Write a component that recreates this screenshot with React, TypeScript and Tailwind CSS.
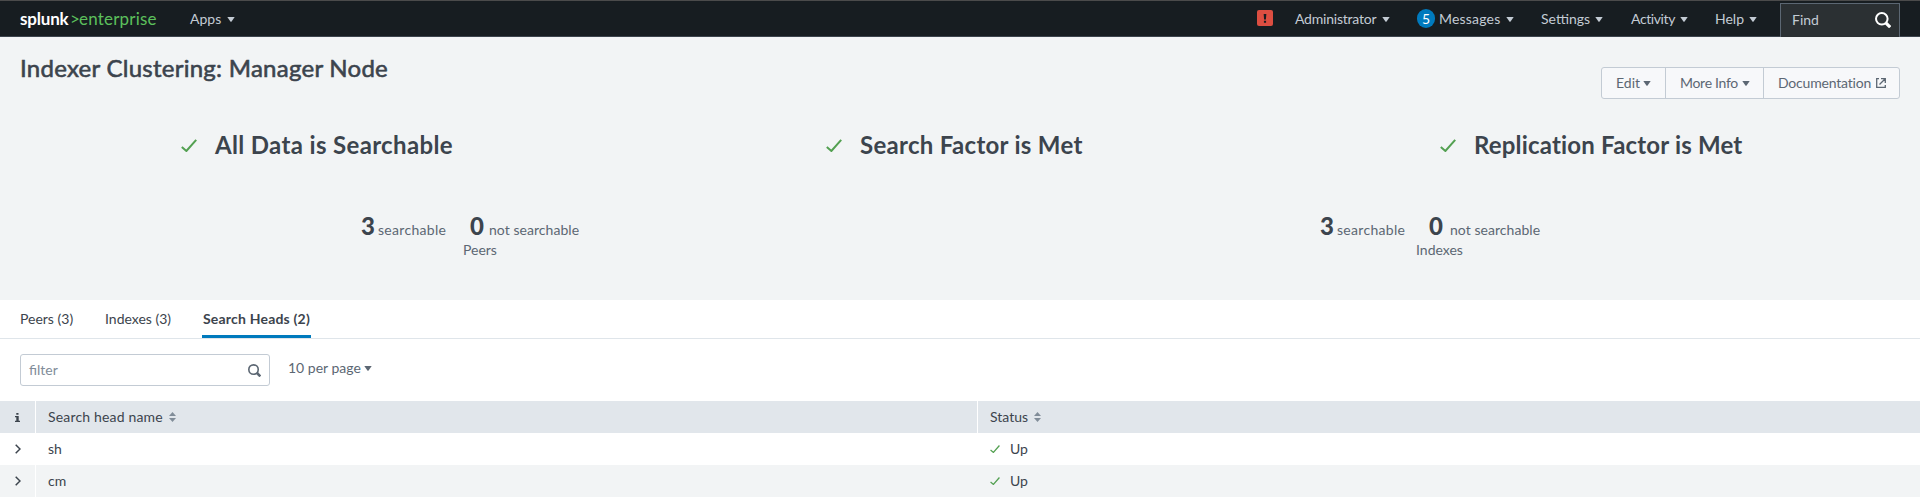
import type { ReactNode } from "react";

function Caret({ className = "" }: { className?: string }) {
  return (
    <svg viewBox="0 0 8 5" className={`h-[5px] w-2 shrink-0 ${className}`} fill="currentColor">
      <path d="M0.3 0h7.4L4.6 4.5q-.6.7-1.2 0z" />
    </svg>
  );
}

function Check({ className = "" }: { className?: string }) {
  return (
    <svg viewBox="0 0 16 13" className={`shrink-0 text-[#53a051] ${className}`} fill="none" stroke="currentColor">
      <path d="M0.8 8l4.6 4L15.2 0.8" vectorEffect="non-scaling-stroke" />
    </svg>
  );
}

function Magnifier({ className = "" }: { className?: string }) {
  return (
    <svg viewBox="0 0 16 16" className={`shrink-0 ${className}`} fill="none" stroke="currentColor">
      <circle cx="6.8" cy="6.8" r="5.8" strokeWidth="2" />
      <path d="M10.8 10.8l4.4 4.4" strokeWidth="3.2" />
    </svg>
  );
}

function Sort() {
  return (
    <svg viewBox="0 0 7 10" className="ml-1.5 h-[10px] w-[7px] shrink-0 text-[#818d99]" fill="currentColor">
      <path d="M0 4L3.5 0 7 4zM0 6h7L3.5 10z" />
    </svg>
  );
}

function Menu({ children, className }: { children: ReactNode; className: string }) {
  return (
    <div className={`flex shrink-0 items-center justify-between whitespace-nowrap ${className}`}>
      <span>{children}</span>
      <Caret />
    </div>
  );
}

function Navbar() {
  return (
    <header className="flex h-[37px] border-t border-b border-t-[#4b4b4b] border-b-[#3c444d] bg-[#171d21] text-[14px] leading-5 text-[#c3cbd4]">
      <div className="ml-5 flex h-[35px] w-[137px] shrink-0 items-center text-[17px] whitespace-nowrap">
        <span className="w-[50px] font-bold tracking-[-0.2px] text-white">splunk</span>
        <span className="w-[9px] text-[#5cc05c]">&gt;</span>
        <span className="tracking-[0.2px] text-[#5cc05c]">enterprise</span>
      </div>
      <Menu className="ml-[33px] h-9 w-[45px]">Apps</Menu>
      <div className="ml-auto flex h-9 items-center">
        <div className="mr-[22px] mb-[2px] flex h-4 w-4 items-center justify-center rounded-[2px] bg-[#dc4e41] text-[#171d21]">
          <svg viewBox="0 0 4 10" className="h-[9px] w-1" fill="currentColor">
            <path d="M0.5 0h3L3 6.2H1zM0.8 7.4h2.4v2.2H0.8z" />
          </svg>
        </div>
        <Menu className="w-[95px] tracking-[-0.22px]">Administrator</Menu>
        <div className="mr-1 mb-px ml-[27px] flex h-[19px] w-[18px] items-center justify-center rounded-full bg-[#007abd] text-white">5</div>
        <Menu className="w-[75px] tracking-[0.2px]">Messages</Menu>
        <Menu className="ml-[27px] w-[62px]">Settings</Menu>
        <Menu className="ml-[28px] w-[57px] tracking-[-0.4px]">Activity</Menu>
        <Menu className="ml-[27px] w-[42px]">Help</Menu>
      </div>
      <div className="mt-[2px] mr-5 ml-[23px] flex h-[34px] w-[120px] items-center justify-between border border-b-0 border-[#5c6773] bg-[#2b3033] pr-2 pl-[11px]">
        <span className="mb-0.5">Find</span>
        <Magnifier className="mb-0.5 h-4 w-4 text-white" />
      </div>
    </header>
  );
}

function Headline({ children, className }: { children: ReactNode; className: string }) {
  return (
    <div className={`flex shrink-0 items-center whitespace-nowrap ${className}`}>
      <Check className="mr-[18px] h-[13px] w-4 stroke-2" />
      <h2 className="text-[24px] leading-8 font-bold">{children}</h2>
    </div>
  );
}

interface StatProps {
  label: string;
  className?: string;
  zeroClass: string;
  labelClass: string;
}

function Stat({ label, className = "", zeroClass, labelClass }: StatProps) {
  return (
    <div className={`w-[230px] shrink-0 text-[#5c6773] ${className}`}>
      <div className="flex items-baseline leading-6 whitespace-nowrap">
        <b className="w-[17px] shrink-0 text-[24px] font-black text-[#3c444d]">3</b>
        <span className="w-[92px] shrink-0 tracking-[0.3px]">searchable</span>
        <b className={`shrink-0 text-[24px] font-black text-[#3c444d] ${zeroClass}`}>0</b>
        <span className="tracking-[0.05px]">not searchable</span>
      </div>
      <div className={`-mt-[2px] leading-5 ${labelClass}`}>{label}</div>
    </div>
  );
}

const heads = ["sh", "cm"];

export default function App() {
  return (
    <div className="h-[502px] w-[1920px] overflow-hidden bg-white font-['Lato',sans-serif] text-[14px] leading-5 text-[#3c444d]">
      <Navbar />
      <section className="h-[263px] bg-[#f2f4f5]">
        <div className="flex h-[62px] justify-between px-5">
          <h1 className="mt-[15px] text-[24px] leading-8 tracking-[0.26px] whitespace-nowrap [-webkit-text-stroke:0.6px_#3c444d]">
            Indexer Clustering: Manager Node
          </h1>
          <div className="mt-[30px] flex h-8 w-[299px] rounded-[3px] border border-[#c3cbd4] bg-[#f7f8fa] text-[#5c6773]">
            <div className="flex w-[64px] border-r border-[#c3cbd4] pl-[14px]">
              <Menu className="h-[30px] w-[35px]">Edit</Menu>
            </div>
            <div className="flex w-[98px] border-r border-[#c3cbd4] pl-[14px]">
              <Menu className="h-[30px] w-[70px] tracking-[-0.3px]">More Info</Menu>
            </div>
            <div className="flex h-[30px] items-center pl-[14px]">
              <span className="w-[98px] tracking-[-0.2px]">Documentation</span>
              <svg viewBox="0 0 10 10" className="h-[10px] w-[10px]" fill="none" stroke="currentColor" strokeWidth="1.3">
                <path d="M3 .7H.7v8.6h8.6V7M5 .7h4.3V5M9.2.8L3.5 6.5" />
              </svg>
            </div>
          </div>
        </div>
        <div className="mt-[30px] flex h-8 pl-[181px]">
          <Headline className="w-[645px] tracking-[0.35px]">All Data is Searchable</Headline>
          <Headline className="w-[614px] tracking-[0.3px]">Search Factor is Met</Headline>
          <Headline className="w-[302px] tracking-[0.18px]">Replication Factor is Met</Headline>
        </div>
        <div className="mt-[53px] flex pl-[361px]">
          <Stat label="Peers" zeroClass="w-[19px]" labelClass="pl-[102px]" />
          <Stat label="Indexes" className="ml-[729px]" zeroClass="w-[21px]" labelClass="pl-[96px]" />
        </div>
      </section>
      <nav className="flex h-[39px] border-b border-[#dfe5ea] pl-5 whitespace-nowrap">
        <div className="w-[85px] pt-[9px]">Peers (3)</div>
        <div className="w-[97px] pt-[9px]">Indexes (3)</div>
        <div className="w-[109px] border-b-[3px] border-[#007abd] pt-[9px] pl-px font-bold tracking-[0.2px]">Search Heads (2)</div>
      </nav>
      <div className="flex h-[62px] pt-[15px] pl-5 text-[#5c6773]">
        <div className="flex h-8 w-[250px] items-center justify-between rounded-[3px] border border-[#c3cbd4] pr-2 pl-2">
          <span className="text-[#818d99]">filter</span>
          <Magnifier className="h-[13px] w-[13px]" />
        </div>
        <Menu className="ml-[18px] h-7 w-[84px]">10 per page</Menu>
      </div>
      <div className="flex h-8 bg-[#e1e6eb]">
        <div className="flex w-9 items-center justify-center border-r border-white">
          <svg viewBox="0 0 5 9" className="h-[9px] w-[5px]" fill="currentColor">
            <path d="M1.3 0h2.2v1.8H1.3zM0 3h3.7v4.7H5V9H0V7.7h1.3V4.3H0z" />
          </svg>
        </div>
        <div className="flex w-[942px] items-center border-r border-white pl-3 tracking-[0.17px]">Search head name<Sort /></div>
        <div className="flex items-center pl-3">Status<Sort /></div>
      </div>
      {heads.map((name, i) => (
        <div key={name} className={`flex h-8 ${i % 2 ? "bg-[#f2f4f5]" : "bg-white"}`}>
          <div className="flex w-9 items-center justify-center border-r border-white">
            <svg viewBox="0 0 6 10" className="h-[10px] w-[6px]" fill="none" stroke="currentColor" strokeWidth="1.5">
              <path d="M.7.7L5 5 .7 9.3" />
            </svg>
          </div>
          <div className="flex w-[942px] items-center pl-3">{name}</div>
          <div className="flex items-center pl-3">
            <Check className="mr-[10px] h-2 w-[10px] stroke-[1.3px]" />
            Up
          </div>
        </div>
      ))}
    </div>
  );
}
